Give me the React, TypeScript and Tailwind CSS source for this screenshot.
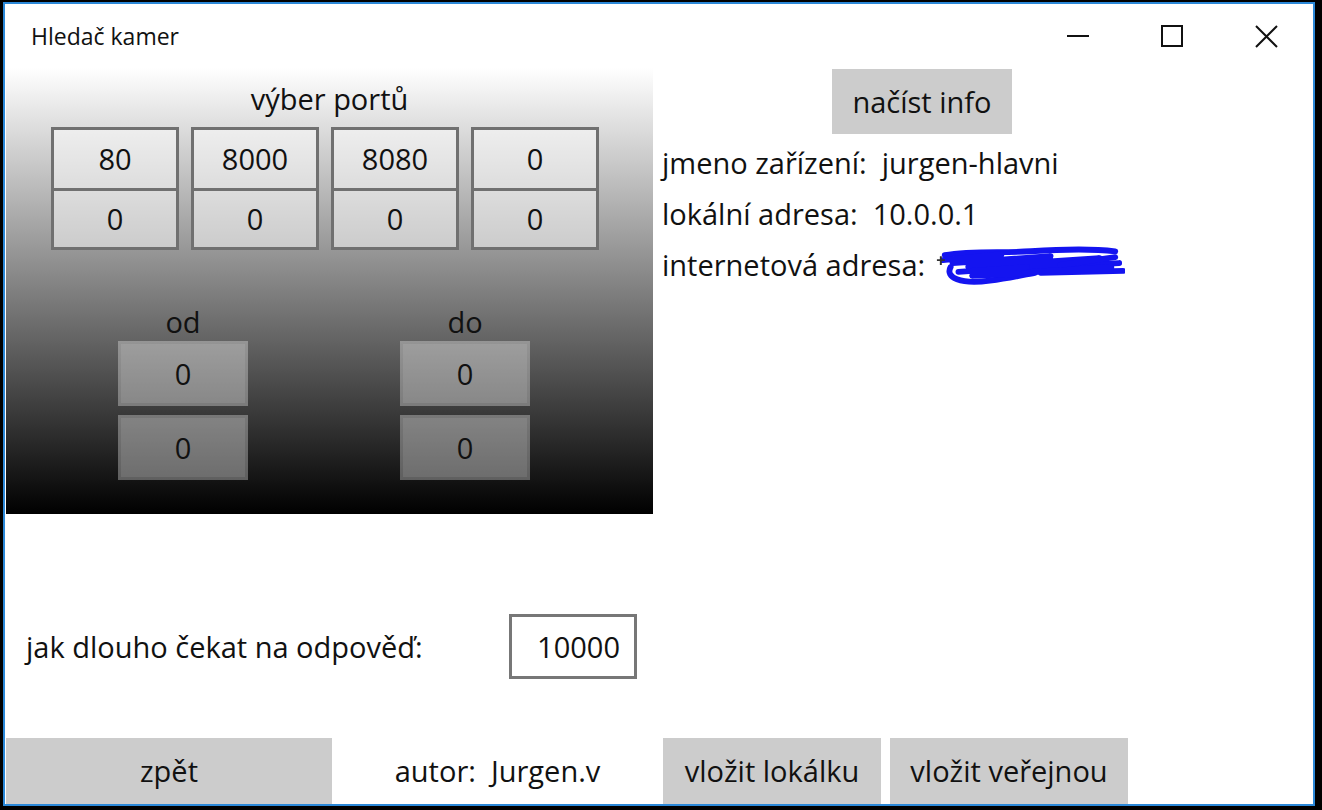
const ports = [
  ["80", "0"],
  ["8000", "0"],
  ["8080", "0"],
  ["0", "0"],
];

function PortColumn({ top, bottom }: { top: string; bottom: string }) {
  return (
    <div className="flex w-[128px] flex-col border-[3px] border-[#707070]">
      <div className="flex h-[61px] items-center justify-center border-b-[3px] border-[#707070] bg-white/50">
        {top}
      </div>
      <div className="flex h-[56px] items-center justify-center bg-white/50">{bottom}</div>
    </div>
  );
}

function RangeBox({ value }: { value: string }) {
  return (
    <div className="flex h-[65px] w-[130px] items-center justify-center border-[3px] border-white/[0.32] bg-white/[0.38] bg-clip-padding">
      {value}
    </div>
  );
}

/* blue marker scribble over the public address */
function Scribble() {
  return (
    <svg width="192" height="42" viewBox="0 0 196 42" className="ml-[8px] mt-[2px]">
      <g fill="none" stroke="#1414f0" strokeWidth="6" strokeLinecap="round" strokeLinejoin="round">
        <path d="M12 10 C40 5, 70 8, 100 6 S160 3, 186 6" />
        <path d="M10 15 L70 9 L20 18 L120 11 L36 22 L170 13 L70 24 L190 18" />
        <path d="M18 22 C12 33, 28 40, 58 36 C80 33, 92 30, 104 28" />
        <path d="M56 30 L182 22 L110 28 L194 26" />
        <path d="M26 27 L96 22 L40 31 L88 29" />
        <path d="M130 20 L186 12" />
      </g>
      <path d="M4 15 L12 15 M8 11 L8 20" stroke="#333" strokeWidth="2" />
    </svg>
  );
}

export default function App() {
  return (
    <div className="h-[810px] w-[1322px] bg-black pb-[4px] pl-[3px] pr-[7px] pt-[2px] font-['Open_Sans','Noto_Sans',sans-serif] text-[#111]">
      <div className="flex h-full flex-col border-2 border-[#2b88d8] bg-white">
        {/* title bar */}
        <div className="flex h-[64px] items-center">
          <span className="flex-1 pl-[26px] text-[23px]">Hledač kamer</span>
          <div className="flex h-full">
            <button className="flex w-[94px] items-center justify-center">
              <svg width="24" height="4" viewBox="0 0 24 4">
                <path d="M1 2 H23" stroke="#111" strokeWidth="2" />
              </svg>
            </button>
            <button className="flex w-[94px] items-center justify-center">
              <svg width="22" height="22" viewBox="0 0 22 22">
                <rect x="1" y="1" width="20" height="20" fill="none" stroke="#111" strokeWidth="2" />
              </svg>
            </button>
            <button className="flex w-[94px] items-center justify-center">
              <svg width="23" height="23" viewBox="0 0 23 23">
                <path d="M1 1 L22 22 M22 1 L1 22" stroke="#111" strokeWidth="2" />
              </svg>
            </button>
          </div>
        </div>

        {/* main */}
        <div className="flex h-[670px] pl-px text-[29px]">
          <div className="flex w-[647px] flex-col">
            <div className="flex h-[446px] flex-col bg-linear-to-b/srgb from-white to-black pt-[12px]">
              <div className="text-center leading-[38px]">výber portů</div>
              <div className="mt-[9px] flex gap-[12px] pl-[45px]">
                {ports.map(([t, b], i) => (
                  <PortColumn key={i} top={t} bottom={b} />
                ))}
              </div>
              <div className="mt-[53px] flex gap-[152px] pl-[112px]">
                {["od", "do"].map((l) => (
                  <div key={l} className="flex flex-col">
                    <div className="text-center leading-[38px]">{l}</div>
                    <RangeBox value="0" />
                    <div className="h-[9px]" />
                    <RangeBox value="0" />
                  </div>
                ))}
              </div>
            </div>
            <div className="mt-[100px] flex h-[65px] items-center">
              <span className="flex-1 pl-[20px]">jak dlouho čekat na odpověď:</span>
              <div className="mr-[16px] flex h-[65px] w-[128px] items-center justify-end border-[3px] border-[#777] pr-[14px]">
                10000
              </div>
            </div>
          </div>

          <div className="flex flex-1 flex-col">
            <button className="ml-[179px] mt-px h-[65px] w-[180px] bg-[#cccccc]">načíst info</button>
            <div className="mt-[3px] flex flex-col whitespace-pre pl-[9px]">
              <div className="flex h-[51px] items-center">jmeno zařízení:  jurgen-hlavni</div>
              <div className="flex h-[51px] items-center">lokální adresa:  10.0.0.1</div>
              <div className="flex h-[51px] items-center">
                internetová adresa:
                <Scribble />
              </div>
            </div>
          </div>
        </div>

        {/* bottom bar */}
        <div className="flex h-[66px] pl-px text-[29px]">
          <button className="w-[326px] bg-[#cccccc]">zpět</button>
          <div className="flex w-[331px] items-center justify-center whitespace-pre">autor:  Jurgen.v</div>
          <button className="w-[218px] bg-[#cccccc]">vložit lokálku</button>
          <button className="ml-[9px] w-[238px] bg-[#cccccc]">vložit veřejnou</button>
        </div>
      </div>
    </div>
  );
}
